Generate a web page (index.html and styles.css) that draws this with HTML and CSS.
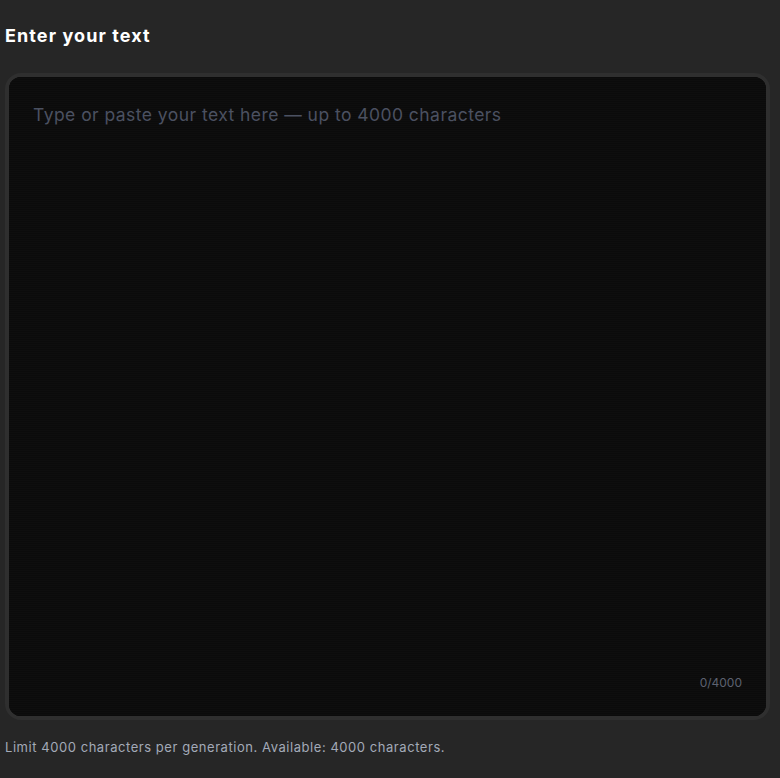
FILE: index.html
```html
<!DOCTYPE html>
<html lang="en">

<head>
    <meta charset="utf-8">
    <meta name="viewport" content="width=device-width, initial-scale=1.0">
    <title>Enter your text</title>
    <link rel="stylesheet" href="styles.css">
</head>

<body>
    <main class="tekst_panel">
        <h2 class="titel">Enter your text</h2>

        <div class="felt_ramme">
            <textarea class="felt" maxlength="4000" placeholder="Type or paste your text here — up to 4000 characters"></textarea>
            <span class="taeller">0/4000</span>
        </div>

        <p class="note">Limit 4000 characters per generation. Available: 4000 characters.</p>
    </main>
</body></html>
```

FILE: styles.css
```css
* {
    box-sizing: border-box;
    margin: 0;
}

body {
    background-color: #262626;
    font-family: Inter, "Noto Sans", sans-serif;
    height: 778px;
}

.tekst_panel {
    padding: 25px 10px 0 5px;
    display: flex;
    flex-direction: column;
}

.titel {
    color: #ffffff;
    font-size: 18px;
    font-weight: 700;
    line-height: 22px;
    letter-spacing: 1.1px;
}

.felt_ramme {
    position: relative;
    margin-top: 26px;
    height: 647px;
    border: 4px solid #2f2f2f;
    border-radius: 16px;
    background-color: #0b0b0b;
    overflow: hidden;
}

.felt {
    display: block;
    width: 100%;
    height: 100%;
    resize: none;
    border: none;
    outline: none;
    padding: 26px 24px;
    color: #d8dce4;
    font-family: inherit;
    font-size: 17.5px;
    line-height: 24px;
    letter-spacing: 0.45px;
    background-color: #0b0b0b;
    background-image: repeating-linear-gradient(to bottom, #0b0b0b 0, #0b0b0b 1px, #0e0e0e 1px, #0e0e0e 2px);
}

.felt::placeholder {
    color: #4b5161;
}

.taeller {
    position: absolute;
    right: 24px;
    bottom: 26px;
    font-size: 12px;
    color: #5d6270;
}

.note {
    margin-top: 19px;
    font-size: 13px;
    letter-spacing: 0.55px;
    color: #a3aab8;
}
```
